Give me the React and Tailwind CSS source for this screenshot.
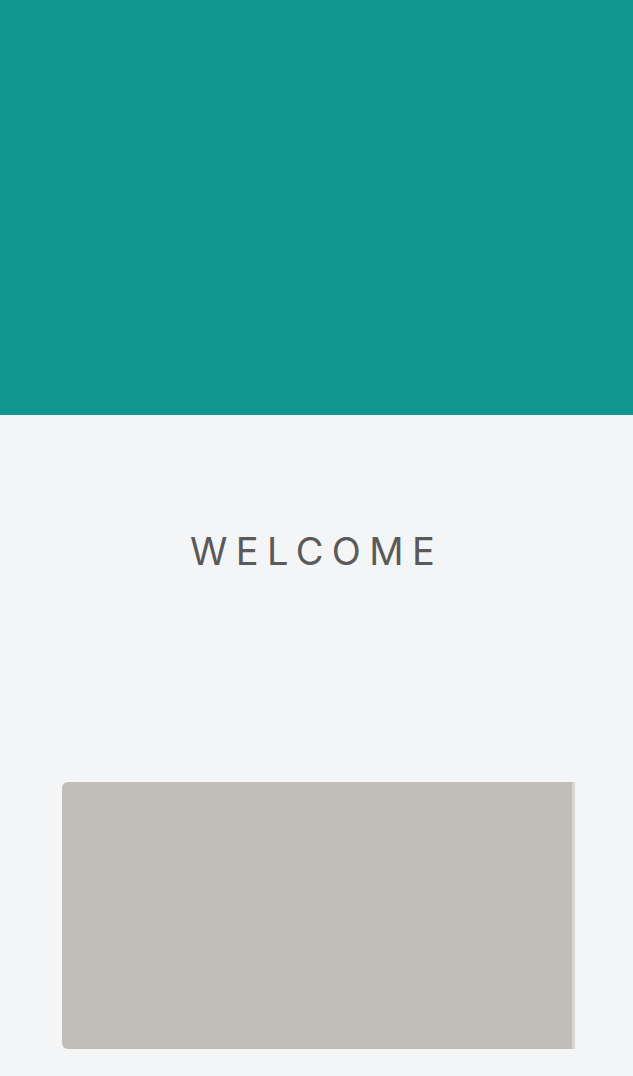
export default function App() {
  return (
    <div className="min-h-[1076px] bg-[#f4f5f7] font-['Inter',sans-serif]">
      {/* bandeau du haut */}
      <header className="h-[415px] bg-[#119692]" />

      <main className="flex flex-col items-center">
        <h1 className="mt-[113px] text-[38px] leading-[46px] font-normal tracking-[0.22em] text-[#5a5a5a]">
          WELCOME
        </h1>

        {/* carrousel */}
        <div className="mt-[208px] w-full overflow-hidden pl-[62px]">
          <div className="flex">
            <div className="h-[267px] w-[510px] shrink-0 rounded-l-md bg-[#c1beb9]" />
            <div className="h-[267px] w-[3px] shrink-0 bg-[#d8d6d3]" />
          </div>
        </div>
      </main>
    </div>
  );
}
